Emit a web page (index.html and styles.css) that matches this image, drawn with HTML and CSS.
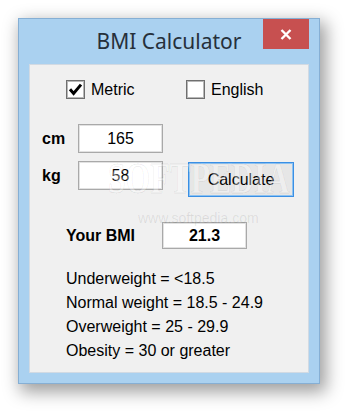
FILE: index.html
```html
<!DOCTYPE html>
<html>
<head>
<meta charset="utf-8">
<title>BMI Calculator</title>
<link rel="stylesheet" href="styles.css">
</head>
<body>
<div class="window">
  <div class="titlebar">
    <div class="title">BMI Calculator</div>
    <div class="close">
      <svg width="12" height="11" viewBox="0 0 12 11"><path d="M1.5 1 L10.5 10 M10.5 1 L1.5 10" stroke="#fff" stroke-width="2.4" fill="none"/></svg>
    </div>
  </div>
  <div class="client">
    <div class="checks">
      <div class="check metric">
        <span class="box"><svg width="17" height="17" viewBox="0 0 17 17"><path d="M3 8.2 L6.6 12.4 L14 3.6" stroke="#000" stroke-width="3" fill="none"/></svg></span>
        <span>Metric</span>
      </div>
      <div class="check">
        <span class="box"></span>
        <span>English</span>
      </div>
    </div>
    <div class="form">
      <div class="label">cm</div>
      <div class="field">165</div>
      <div class="spacer"></div>
      <div class="label">kg</div>
      <div class="field">58</div>
      <div class="button">Calculate</div>
    </div>
    <div class="bmi">
      <div class="bmi-label">Your BMI</div>
      <div class="field result">21.3</div>
    </div>
    <div class="ranges">
      <div>Underweight = &lt;18.5</div>
      <div>Normal weight = 18.5 - 24.9</div>
      <div>Overweight = 25 - 29.9</div>
      <div>Obesity = 30 or greater</div>
    </div>
    <div class="wm">SOFTPEDIA</div>
    <div class="wm-url">www.softpedia.com</div>
  </div>
</div>
</body>
</html>
```
FILE: styles.css
```css
html, body {
  margin: 0;
  padding: 0;
  background: #ffffff;
}
body {
  width: 350px;
  height: 415px;
  overflow: hidden;
  font-family: "Liberation Sans", Arial, sans-serif;
  font-size: 16px;
  color: #000;
}
.window {
  margin: 18px 0 0 18px;
  width: 302px;
  height: 366px;
  box-sizing: border-box;
  border: 1px solid #86afd4;
  background: #aad1f0;
  padding: 0 10px 10px 10px;
  box-shadow: 4px 6px 16px 2px rgba(0, 0, 0, 0.38);
}
.titlebar {
  height: 45px;
  display: grid;
  grid-template-columns: 1fr auto 1fr;
  align-items: start;
}
.title {
  grid-column: 2;
  margin-top: 7px;
  font-family: "Noto Sans", "Open Sans", sans-serif;
  font-size: 21px;
  line-height: 30px;
  color: #26303b;
  white-space: nowrap;
}
.close {
  grid-column: 3;
  justify-self: end;
  width: 46px;
  height: 30px;
  background: #c75050;
  display: flex;
  align-items: center;
  justify-content: center;
}
.client {
  position: relative;
  height: 309px;
  box-sizing: border-box;
  border: 1px solid #d2dae3;
  background: #f0f0f0;
  padding-top: 15px;
}
.checks {
  display: flex;
  margin-left: 36px;
  height: 19px;
}
.check {
  display: flex;
  align-items: center;
  gap: 6px;
}
.check.metric {
  width: 120px;
}
.box {
  width: 19px;
  height: 19px;
  box-sizing: border-box;
  border: 1px solid #6f6f6f;
  box-shadow: inset 0 0 0 1px #b8b8b8;
  background: #fff;
  display: flex;
  align-items: center;
  justify-content: center;
}
.form {
  margin-top: 25px;
  margin-left: 12px;
  display: grid;
  grid-template-columns: 36px 85px auto;
  row-gap: 8px;
  align-items: start;
}
.label {
  height: 29px;
  display: flex;
  align-items: center;
  font-weight: bold;
}
.field {
  height: 29px;
  box-sizing: border-box;
  border: 1px solid #a9a9a9;
  box-shadow: inset 0 0 0 1px #e2e2e2;
  background: #fff;
  text-align: center;
  line-height: 27px;
}
.button {
  margin-left: 25px;
  margin-top: 1px;
  width: 106px;
  height: 35px;
  box-sizing: border-box;
  border: 1px solid #3a8fe4;
  box-shadow: inset 0 0 0 1px #8cc2f2;
  background: #e6e6e6;
  display: flex;
  align-items: center;
  justify-content: center;
}
.bmi {
  margin-top: 25px;
  margin-left: 36px;
  display: flex;
  align-items: center;
}
.bmi-label {
  width: 96px;
  font-weight: bold;
}
.result {
  width: 85px;
  height: 27px;
  line-height: 25px;
  font-weight: bold;
}
.ranges {
  margin-top: 18px;
  margin-left: 36px;
  line-height: 24px;
}
.wm {
  position: absolute;
  left: 78px;
  top: 92px;
  font-family: "Liberation Serif", serif;
  font-size: 44px;
  line-height: 44px;
  font-weight: bold;
  color: rgba(255, 255, 255, 0.35);
  -webkit-text-stroke: 1px rgba(0, 0, 0, 0.07);
  transform: scaleX(0.72);
  transform-origin: left top;
  pointer-events: none;
  white-space: nowrap;
}
.wm-url {
  position: absolute;
  left: 108px;
  top: 146px;
  font-size: 14px;
  line-height: 14px;
  color: rgba(0, 0, 0, 0.09);
  pointer-events: none;
  white-space: nowrap;
}
```
